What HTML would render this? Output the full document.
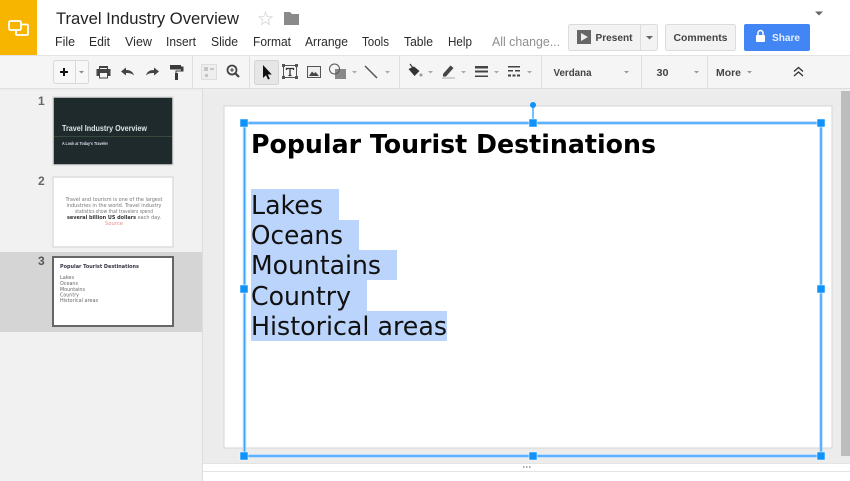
<!DOCTYPE html>
<html><head><meta charset="utf-8"><style>
html,body{margin:0;padding:0;background:#fff}
svg{display:block}
text{font-family:"Liberation Sans",Arial,sans-serif}
.v{font-family:"DejaVu Sans",Verdana,sans-serif}
.m{font-size:12.500px;fill:#2b2b2b}
.b{font-size:10.500px;font-weight:bold;fill:#444}
</style></head><body>
<svg width="850" height="481" viewBox="0 0 850 481" xmlns="http://www.w3.org/2000/svg">
<rect width="850" height="481" fill="#fff"/>
<!-- logo -->
<rect width="37" height="55" fill="#f7b500"/>
<g fill="none" stroke="#fff" stroke-width="1.800"><rect x="9" y="21" width="12" height="9" rx="1.500"/><path d="M21 24.500h6a1 1 0 0 1 1 1v8.500a1 1 0 0 1-1 1h-10a1 1 0 0 1-1-1v-4"/></g>
<!-- title -->
<text x="56" y="24" font-size="17" fill="#222" textLength="183" lengthAdjust="spacingAndGlyphs">Travel Industry Overview</text>
<path d="M265.500 12l1.700 4.500 4.800.3-3.700 3 1.200 4.700-4-2.600-4 2.600 1.200-4.700-3.700-3 4.800-.3z" fill="#fff" stroke="#ddd"/>
<path d="M284 12h6l2 2h7v11h-15z" fill="#8a8a8a"/>
<!-- menu -->
<text x="55" y="46" class="m" textLength="20" lengthAdjust="spacingAndGlyphs">File</text>
<text x="89" y="46" class="m" textLength="21" lengthAdjust="spacingAndGlyphs">Edit</text>
<text x="125" y="46" class="m" textLength="27" lengthAdjust="spacingAndGlyphs">View</text>
<text x="166" y="46" class="m" textLength="30" lengthAdjust="spacingAndGlyphs">Insert</text>
<text x="211" y="46" class="m" textLength="27" lengthAdjust="spacingAndGlyphs">Slide</text>
<text x="253" y="46" class="m" textLength="38" lengthAdjust="spacingAndGlyphs">Format</text>
<text x="305" y="46" class="m" textLength="43" lengthAdjust="spacingAndGlyphs">Arrange</text>
<text x="362" y="46" class="m" textLength="27" lengthAdjust="spacingAndGlyphs">Tools</text>
<text x="404" y="46" class="m" textLength="29" lengthAdjust="spacingAndGlyphs">Table</text>
<text x="448" y="46" class="m" textLength="24" lengthAdjust="spacingAndGlyphs">Help</text>
<text x="492" y="46" font-size="12.500" fill="#8f8f8f" textLength="68" lengthAdjust="spacingAndGlyphs">All change...</text>
<path d="M815 11.500h8l-4 4z" fill="#666"/>
<!-- present -->
<rect x="568.500" y="24.500" width="89" height="26" rx="2" fill="#f3f3f3" stroke="#dcdcdc"/>
<path d="M640.500 25v25" stroke="#dcdcdc"/>
<rect x="577" y="30" width="14" height="14" fill="#666"/><path d="M581 33l7 4-7 4z" fill="#eee"/>
<text x="595.500" y="41" class="b" textLength="37" lengthAdjust="spacingAndGlyphs">Present</text>
<path d="M646 36h7l-3.500 3.500z" fill="#666"/>
<rect x="665.500" y="24.500" width="70" height="26" rx="2" fill="#f3f3f3" stroke="#dcdcdc"/>
<text x="673.500" y="41" class="b" textLength="54" lengthAdjust="spacingAndGlyphs">Comments</text>
<rect x="744" y="24" width="66" height="27" rx="2" fill="#4285f4"/>
<rect x="756" y="35" width="9" height="7" rx="1" fill="#fff"/><path d="M758 35v-2a2.500 2.500 0 0 1 5 0v2" fill="none" stroke="#fff" stroke-width="1.500"/>
<text x="772" y="41" font-size="10.500" font-weight="bold" fill="#e6efff" textLength="28" lengthAdjust="spacingAndGlyphs">Share</text>
<!-- toolbar -->
<rect y="55" width="850" height="33" fill="#f5f5f5"/>
<path d="M0 55.500h850" stroke="#e3e3e3"/><path d="M0 88.500h850" stroke="#dedede"/>
<rect y="89" width="850" height="2" fill="#eee"/>
<g stroke="#dfdfdf"><path d="M192.500 56v32M249.500 56v32M399.500 56v32M541.500 56v32M641.500 56v32M707.500 56v32"/></g>
<rect x="53.500" y="60.500" width="35" height="23" rx="2" fill="#f7f7f7" stroke="#d8d8d8"/><path d="M75.500 61v22" stroke="#d8d8d8"/>
<path d="M60 72h8M64 68v8" stroke="#111" stroke-width="2"/>
<path d="M79 71h5l-2.500 2.500z" fill="#888"/>
<!-- print -->
<path d="M99 66h9v3h2.500v7h-2.500v2.500h-9v-2.500h-2.500v-7h2.500z" fill="#444"/><rect x="100" y="73" width="7" height="4.500" fill="#f5f5f5"/><rect x="100" y="68" width="7" height="1" fill="#f5f5f5"/>
<path d="M121 71.500l5-4v2.500c4 0 7 1.500 8 5.500-2-2-4.500-2.500-8-2.500v2.500z" fill="#444"/>
<path d="M159 71.500l-5-4v2.500c-4 0-7 1.500-8 5.500 2-2 4.500-2.500 8-2.500v2.500z" fill="#444"/>
<path d="M170 65h11v4.500h-11zM181 66.500h2.500v5h-7v2h-1v-3h5.500zM175 73h3v7h-3z" fill="#3a3a3a"/>
<!-- disabled -->
<rect x="201.500" y="64.500" width="15" height="15" fill="#eee" stroke="#ddd"/><g fill="#c4c4c4"><rect x="204" y="67" width="4" height="4"/><rect x="210" y="68" width="4" height="2"/><rect x="205" y="74" width="3" height="3"/></g>
<circle cx="232" cy="70" r="4.500" fill="none" stroke="#444" stroke-width="1.800"/><path d="M235.500 73.500l3.500 3.500" stroke="#444" stroke-width="2.200"/><path d="M230 70h4M232 68v4" stroke="#444"/>
<!-- cursor selected -->
<rect x="254.500" y="60.500" width="24" height="24" rx="2" fill="#e6e6e6" stroke="#d4d4d4"/>
<path d="M263 65v13l3-2.800 2 4.300 1.800-.8-2-4.200h4z" fill="#111"/>
<!-- textbox -->
<rect x="283.500" y="65.500" width="13" height="12" fill="none" stroke="#555"/><g fill="#555"><rect x="282" y="64" width="3" height="3"/><rect x="295" y="64" width="3" height="3"/><rect x="282" y="76" width="3" height="3"/><rect x="295" y="76" width="3" height="3"/></g>
<path d="M286.500 70v-1.500h7v1.500M290 68.500v7M288.500 75.500h3" fill="none" stroke="#333" stroke-width="1.300"/>
<!-- image -->
<rect x="307.500" y="66.500" width="13" height="11" fill="#eee" stroke="#555"/><path d="M309 76l3-4.500 2 2 1.500-1.500 3.500 4z" fill="#444"/>
<!-- shape -->
<rect x="335" y="69" width="11" height="10" fill="#888"/><circle cx="334.500" cy="69" r="5" fill="none" stroke="#555"/>
<path d="M352 71h5l-2.500 2.500z" fill="#aaa"/>
<path d="M365 66l12 12" stroke="#555" stroke-width="1.500"/>
<path d="M385 71h5l-2.500 2.500z" fill="#aaa"/>
<!-- fill -->
<path d="M408.500 69l5.500-2.500 5.500 4.500-5 5z" fill="#333"/><path d="M410 64l3 4" stroke="#333" stroke-width="1.200"/><circle cx="421" cy="75" r="1.500" fill="#999"/>
<path d="M428 71h5l-2.500 2.500z" fill="#aaa"/>
<path d="M443 74l7.500-8.500 3 2.500-7.500 8.500h-3z" fill="#444"/><path d="M442 78h13" stroke="#aaa"/>
<path d="M461 71h5l-2.500 2.500z" fill="#aaa"/>
<path d="M475 66h13v2.500h-13zM475 70.500h13v2h-13zM475 75.500h13v1.500h-13z" fill="#444"/>
<path d="M494 71h5l-2.500 2.500z" fill="#aaa"/>
<path d="M508 66h12v1.500h-12zM508 70h5v1.500h-5zM515 70h5v1.500h-5zM508 74.500h3v2h-3zM512.500 74.500h3v2h-3zM517 74.500h3v2h-3z" fill="#444"/>
<path d="M527 71h5l-2.500 2.500z" fill="#aaa"/>
<text x="553.500" y="76" class="b" textLength="38" lengthAdjust="spacingAndGlyphs">Verdana</text><path d="M624 71h5l-2.500 2.500z" fill="#999"/>
<text x="656.500" y="76" class="b" textLength="12" lengthAdjust="spacingAndGlyphs">30</text><path d="M694 71h5l-2.500 2.500z" fill="#999"/>
<text x="716" y="76" class="b" textLength="25" lengthAdjust="spacingAndGlyphs">More</text><path d="M747 71h5l-2.500 2.500z" fill="#999"/>
<path d="M794 71.500l4.500-4 4.500 4M794 76l4.500-4 4.500 4" fill="none" stroke="#333" stroke-width="1.300"/>
<!-- filmstrip -->
<rect y="91" width="203" height="390" fill="#f1f1f1"/>
<rect y="252" width="202" height="80" fill="#d5d5d5"/>
<rect x="202" y="89" width="1" height="392" fill="#ddd"/>
<text x="38" y="105" font-size="12" font-weight="bold" fill="#666">1</text>
<text x="38" y="185" font-size="12" font-weight="bold" fill="#666">2</text>
<text x="38" y="265" font-size="12" fill="#555" font-weight="bold">3</text>
<rect x="53" y="97" width="120" height="68" fill="#1f2a2c" stroke="#ddd" stroke-width="1.500"/>
<text x="62" y="131" font-size="8.500" font-weight="bold" fill="#d8e8ea" textLength="85" lengthAdjust="spacingAndGlyphs">Travel Industry Overview</text>
<path d="M54 136.500h118" stroke="#35493c"/>
<text x="62" y="145" font-size="4.500" font-weight="bold" fill="#dde" textLength="46" lengthAdjust="spacingAndGlyphs">A Look at Today's Traveler</text>
<rect x="53" y="177" width="120" height="70" fill="#fff" stroke="#ddd" stroke-width="1.500"/>
<g font-size="5" fill="#777" text-anchor="middle">
<text class="v" x="114" y="201" textLength="97" lengthAdjust="spacingAndGlyphs">Travel and tourism is one of the largest</text>
<text class="v" x="114" y="207" textLength="95" lengthAdjust="spacingAndGlyphs">industries in the world. Travel industry</text>
<text class="v" x="114" y="213" textLength="78" lengthAdjust="spacingAndGlyphs">statistics show that travelers spend</text>
<text class="v" x="114" y="219" textLength="94" lengthAdjust="spacingAndGlyphs"><tspan font-weight="bold" fill="#333">several billion US dollars</tspan> each day.</text>
<text class="v" x="114" y="225" fill="#f08a8a" textLength="18" lengthAdjust="spacingAndGlyphs">Source</text>
</g>
<rect x="53" y="257" width="120" height="69" fill="#fff" stroke="#666" stroke-width="2"/>
<text class="v" x="60" y="268" font-size="5" font-weight="bold" fill="#334" textLength="79" lengthAdjust="spacingAndGlyphs">Popular Tourist Destinations</text>
<g font-size="5" fill="#666">
<text class="v" x="60" y="279" textLength="14" lengthAdjust="spacingAndGlyphs">Lakes</text>
<text class="v" x="60" y="285" textLength="18" lengthAdjust="spacingAndGlyphs">Oceans</text>
<text class="v" x="60" y="291" textLength="25" lengthAdjust="spacingAndGlyphs">Mountains</text>
<text class="v" x="60" y="296.500" textLength="19" lengthAdjust="spacingAndGlyphs">Country</text>
<text class="v" x="60" y="302" textLength="38" lengthAdjust="spacingAndGlyphs">Historical areas</text>
</g>
<!-- canvas -->
<rect x="203" y="91" width="647" height="372" fill="#ececec"/>
<rect x="841" y="91" width="9" height="365" fill="#bdbdbd"/>
<rect x="203" y="463" width="647" height="18" fill="#fff"/>
<path d="M203 463.500h647M203 471.500h647" stroke="#e4e4e4"/>
<g fill="#aaa"><rect x="523" y="466" width="1.500" height="2"/><rect x="526" y="466" width="1.500" height="2"/><rect x="529" y="466" width="1.500" height="2"/></g>
<rect x="224" y="106" width="608" height="342" fill="#fff" stroke="#d6d6d6"/>
<!-- selection highlight -->
<g fill="#bbd4fb">
<rect x="251" y="189" width="88" height="31"/>
<rect x="251" y="220" width="108" height="30"/>
<rect x="251" y="250" width="146" height="30"/>
<rect x="251" y="280" width="116" height="31"/>
<rect x="251" y="311" width="196" height="30"/>
</g>
<text class="v" x="251" y="153" font-size="26" font-weight="bold" fill="#000" textLength="405" lengthAdjust="spacingAndGlyphs">Popular Tourist Destinations</text>
<g font-size="26" fill="#111">
<text class="v" x="251" y="214" textLength="72" lengthAdjust="spacingAndGlyphs">Lakes</text>
<text class="v" x="251" y="244" textLength="92" lengthAdjust="spacingAndGlyphs">Oceans</text>
<text class="v" x="251" y="274" textLength="130" lengthAdjust="spacingAndGlyphs">Mountains</text>
<text class="v" x="251" y="305" textLength="100" lengthAdjust="spacingAndGlyphs">Country</text>
<text class="v" x="251" y="335" textLength="196" lengthAdjust="spacingAndGlyphs">Historical areas</text>
</g>
<!-- selection frame -->
<rect x="244.500" y="123" width="576.500" height="333" fill="none" stroke="#b5d9ff" stroke-width="3.500"/>
<rect x="244.500" y="123" width="576.500" height="333" fill="none" stroke="#3fa4fb" stroke-width="1.500"/>
<path d="M533 105v18" stroke="#4aa8f8" stroke-width="1.500"/>
<circle cx="533" cy="105" r="3" fill="#0f93fb"/>
<g fill="#0f93fb" stroke="#fff" stroke-width="0.500">
<rect x="240" y="119" width="8" height="8"/><rect x="529" y="119" width="8" height="8"/><rect x="817" y="119" width="8" height="8"/>
<rect x="240" y="285" width="8" height="8"/><rect x="817" y="285" width="8" height="8"/>
<rect x="240" y="452" width="8" height="8"/><rect x="529" y="452" width="8" height="8"/><rect x="817" y="452" width="8" height="8"/>
</g>
</svg>
</body></html>
